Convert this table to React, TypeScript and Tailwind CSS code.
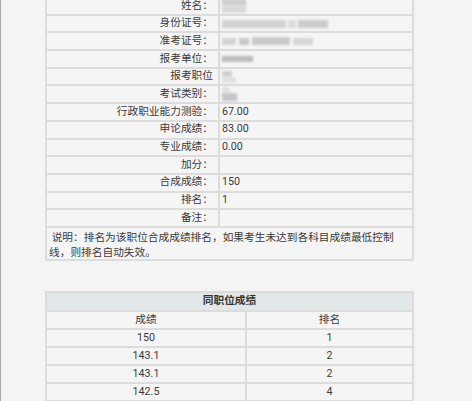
import React from "react";

const Blur = ({ w, h, dx = 0, dy = 0, shade = "#c8c8c8" }: { w: number; h: number; dx?: number; dy?: number; shade?: string }) => (
  <span
    className="inline-block blur-[1px]"
    style={{ width: w, height: h, marginLeft: dx, marginTop: dy, background: shade }}
  />
);

const rows: { label: string; value?: React.ReactNode }[] = [
  { label: "姓名：", value: <span className="flex flex-col"><Blur w={24} h={7} dy={-2} shade="#cfcfcf" /><Blur w={24} h={7} shade="#dadada" /></span> },
  { label: "身份证号：", value: <span className="flex gap-[2px] items-center"><Blur w={64} h={8} shade="#d2d2d2" /><Blur w={8} h={8} shade="#dcdcdc" /><Blur w={30} h={8} shade="#cccccc" /></span> },
  { label: "准考证号：", value: <span className="flex gap-[3px] items-center"><Blur w={14} h={7} shade="#d4d4d4" /><Blur w={10} h={7} shade="#c8c8c8" /><Blur w={38} h={8} shade="#cacaca" /><Blur w={20} h={7} shade="#d6d6d6" /></span> },
  { label: "报考单位：", value: <Blur w={31} h={6} shade="#bdbdbd" /> },
  { label: "报考职位", value: <span className="flex flex-col"><Blur w={10} h={6} shade="#d0d0d0" /><Blur w={14} h={6} shade="#e0e0e0" /></span> },
  { label: "考试类别：", value: <span className="flex flex-col"><Blur w={8} h={6} shade="#e0e0e0" /><Blur w={15} h={8} shade="#c6c6c6" /></span> },
  { label: "行政职业能力测验：", value: "67.00" },
  { label: "申论成绩：", value: "83.00" },
  { label: "专业成绩：", value: "0.00" },
  { label: "加分：" },
  { label: "合成成绩：", value: "150" },
  { label: "排名：", value: "1" },
  { label: "备注：" },
];

const same = [
  ["150", "1"],
  ["143.1", "2"],
  ["143.1", "2"],
  ["142.5", "4"],
];

export default function App() {
  return (
    <div
      className="w-[472px] h-[401px] overflow-hidden bg-[#f4f4f4] border-l-[1px] border-[#a8a8a8] text-[10.7px] text-[#3a3a3a]"
      style={{ fontFamily: 'Roboto, "Noto Sans CJK SC", sans-serif' }}
    >
      <div className="ml-[44px] w-[369px] border-x-2 border-[#dcdcdc] bg-[#f5f5f5]">
        {rows.map((r, i) => (
          <div
            key={i}
            className={i === 0 ? "flex h-[15.7px] border-b-2 border-[#dcdcdc]" : "flex h-[17.7px] border-b-2 border-[#dcdcdc]"}
          >
            <div className="w-[173px] shrink-0 border-r-2 border-[#dcdcdc] flex items-center justify-end pr-[5px] leading-none">
              {r.label}
            </div>
            <div className="flex-1 flex items-center pl-[2px] leading-none">{r.value}</div>
          </div>
        ))}
        <div className="h-[33px] border-b-2 border-[#dcdcdc] pl-[2px] pt-[2px] leading-[15px]">
          &nbsp;说明：排名为该职位合成成绩排名，如果考生未达到各科目成绩最低控制
          <br />
          线，则排名自动失效。
        </div>
      </div>

      <div className="ml-[44px] mt-[30px] w-[369px] border-2 border-[#dcdcdc] bg-[#f5f5f5]">
        <div className="h-[19px] bg-[#e2e7e7] border-b-2 border-[#dcdcdc] flex items-center justify-center font-bold text-[#333] leading-none">
          同职位成绩
        </div>
        <div className="flex h-[18px] border-b-2 border-[#dcdcdc] leading-none">
          <div className="w-[200px] border-r-2 border-[#dcdcdc] flex items-center justify-center">成绩</div>
          <div className="flex-1 flex items-center justify-center">排名</div>
        </div>
        {same.map((s, i) => (
          <div key={i} className="flex h-[18px] border-b-2 border-[#dcdcdc] leading-none">
            <div className="w-[200px] border-r-2 border-[#dcdcdc] flex items-center justify-center">{s[0]}</div>
            <div className="flex-1 flex items-center justify-center">{s[1]}</div>
          </div>
        ))}
      </div>
    </div>
  );
}
